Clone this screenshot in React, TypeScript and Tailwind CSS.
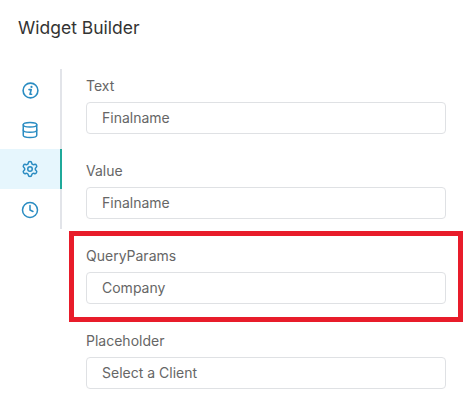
import { Database, Settings, Clock } from "lucide-react";

const font = { fontFamily: "Inter, 'Liberation Sans', sans-serif" };

function Field({ label, value }: { label: string; value: string }) {
  return (
    <div className="flex flex-col">
      <div className="h-5 text-[14px] leading-5 text-[#666666] mb-[6px]">{label}</div>
      <div className="h-8 w-[360px] border border-[#dfe1e4] rounded-[4px] pl-[15px] pb-[1px] flex items-center text-[14px] text-[#666666] bg-white">
        {value}
      </div>
    </div>
  );
}

function Tab({ active, children }: { active?: boolean; children: React.ReactNode }) {
  return (
    <div className={`h-10 flex items-center justify-center border-r-2 ${active ? "bg-[#e6f6fd] border-[#1fa99a]" : "border-[#e2e4e9]"}`}>
      {children}
    </div>
  );
}

export default function App() {
  return (
    <div className="relative w-[469px] h-[405px] bg-white overflow-hidden" style={font}>
      <div className="pl-[18px] pt-[16px] h-[69px] text-[17.5px] leading-6 text-[#333333]">Widget Builder</div>
      <div className="flex">
        <div className="w-[62px] shrink-0 self-start">
          <Tab>
            <svg className="mt-[2px]" width="17" height="17" viewBox="0 0 17 17" fill="none" stroke="#2a8cc2" strokeWidth="1.6">
              <circle cx="8.5" cy="8.5" r="7.4" />
              <circle cx="9.5" cy="4.9" r="1.1" fill="#2a8cc2" stroke="none" />
              <path d="M7 7.6h2.2l-1.2 4.6h1.6" strokeWidth="1.6" strokeLinecap="round" strokeLinejoin="round" />
            </svg>
          </Tab>
          <Tab><Database className="mt-[1px]" size={18} color="#2a8cc2" strokeWidth={2} /></Tab>
          <Tab active><Settings size={18} color="#2a8cc2" strokeWidth={2} /></Tab>
          <Tab><Clock className="mt-[1px]" size={18} color="#2a8cc2" strokeWidth={2} /></Tab>
        </div>
        <div className="pl-6 pt-[7px] flex flex-col gap-[27px]">
          <Field label="Text" value="Finalname" />
          <Field label="Value" value="Finalname" />
          <Field label="QueryParams" value="Company" />
          <Field label="Placeholder" value="Select a Client" />
        </div>
      </div>
      <div className="absolute left-[69px] top-[231px] w-[394px] h-[91px] border-[5px] border-[#e81c2a] pointer-events-none" />
    </div>
  );
}
